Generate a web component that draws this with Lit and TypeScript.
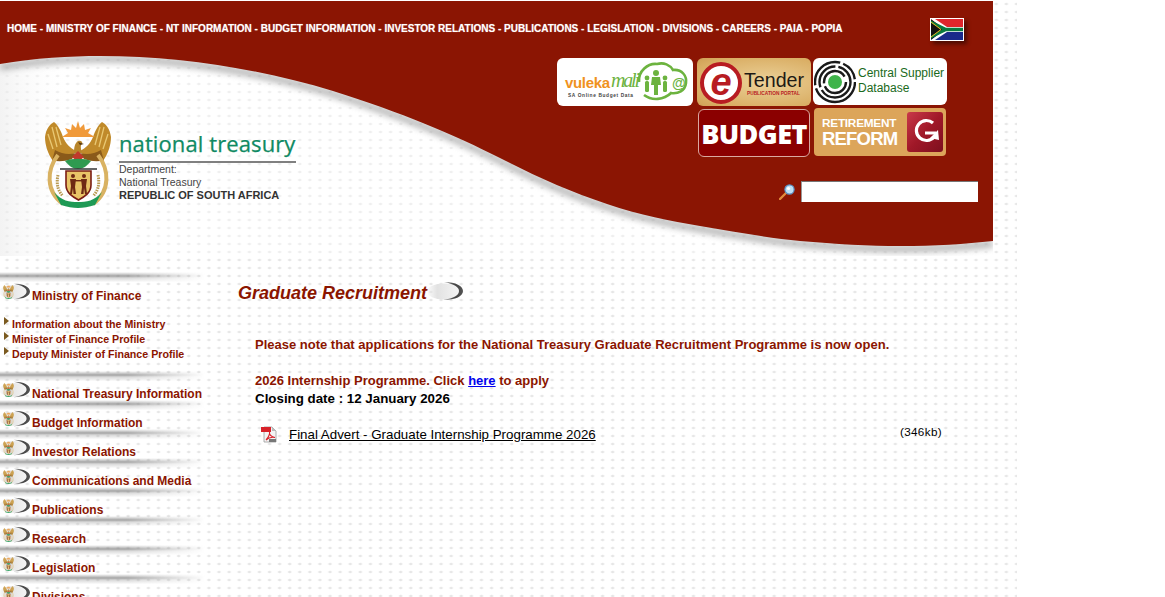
import { LitElement, html, css, svg } from "lit";
import { customElement } from "lit/decorators.js";

const WAVE =
  "M0,63 C35,57 70,55 100,55 C180,55 260,68 333,90 C400,111 455,134 500,157 C535,175 570,191 607,203 C640,214 670,220 700,225 C735,231 770,237 800,240 C835,243 870,245 900,245 C935,245 965,243 993,240";

const arms = () => svg`
  <path d="M0,16 C1,8 5,3 9,1 C13,4 16,10 18,16 C21,23 25,27 31,30 C26,37 17,40 8,40 C3,33 0,24 0,16Z" fill="#c08a2a"/>
  <path d="M66,16 C65,8 61,3 57,1 C53,4 50,10 48,16 C45,23 41,27 35,30 C40,37 49,40 58,40 C63,33 66,24 66,16Z" fill="#c08a2a"/>
  <path d="M3,13 L8,28 M7,6 L12,26 M11,6 L16,24 M63,13 L58,28 M59,6 L54,26 M55,6 L50,24" stroke="#e9c873" stroke-width="1.3" fill="none"/>
  <path d="M10,29 C17,33 24,34 31,32 L27,38 C20,41 13,40 7,40Z" fill="#8a5a1a"/>
  <path d="M56,29 C49,33 42,34 35,32 L39,38 C46,41 53,40 59,40Z" fill="#8a5a1a"/>
  <path d="M17,16 L23,12 L20,7 L26,9 L27,3 L31,7 L33,0 L35,7 L39,3 L40,9 L46,7 L43,12 L50,16 Z" fill="#f09a3a"/>
  <path d="M29,32 C29,26 30,22 33,20 C36,19 38,21 37,23 C35,24 36,28 37,32 Z" fill="#b8862c"/>
  <path d="M33,21 L39,23 L35,24Z" fill="#5a3a12"/>
  <path d="M27,36 L33,30 L39,36 L33,41Z" fill="#c0392b"/>
  <path d="M20,40 C26,37 40,37 46,40 C42,45 38,48 33,48 C28,48 24,45 20,40Z" fill="#2f9a50"/>
  <path d="M15,48 H52" stroke="#333" stroke-width="1.4"/>
  <path d="M13,34 C2,48 0,70 18,83" stroke="#d9b262" stroke-width="4" fill="none"/>
  <path d="M53,34 C64,48 66,70 48,83" stroke="#d9b262" stroke-width="4" fill="none"/>
  <path d="M13,54 C11,63 13,70 18,75 M53,54 C55,63 53,70 48,75" stroke="#b99a52" stroke-width="3" stroke-dasharray="1.5 1" fill="none"/>
  <path d="M21,50 H46 V64 C46,72 39,76 33.5,79 C28,76 21,72 21,64Z" fill="#e8c467" stroke="#7a1c14" stroke-width="1.6"/>
  <g fill="#6e2a14">
    <circle cx="28" cy="55" r="2"/><circle cx="39" cy="55" r="2"/>
    <path d="M25,58 H31 L30,66 L31,73 H28.5 L28,67 L27,73 H25 L26,65Z"/>
    <path d="M36,58 H42 L41,65 L42,73 H40 L39,67 L38.5,73 H36 L37,66Z"/>
    <rect x="30" y="59" width="7" height="1.4"/>
  </g>
  <path d="M9,71 C16,80 25,81 33,81 C41,81 50,80 57,71 L50,84 C44,86 38,87 33,87 C28,87 22,86 16,84Z" fill="#1e9a55"/>
`;

const swoosh = (w: number, h: number) => svg`
  <svg class="swoosh" width=${w} height=${h} viewBox="0 0 35 18" aria-hidden="true">
    <defs>
      <linearGradient id="sw" x1="0" x2="1">
        <stop offset="0" stop-color="#e4e4e4" stop-opacity=".1"/>
        <stop offset=".3" stop-color="#e2e2e2"/>
        <stop offset="1" stop-color="#f6f6f6"/>
      </linearGradient>
      <linearGradient id="cr" x1="0" x2="1">
        <stop offset="0" stop-color="#999"/>
        <stop offset=".6" stop-color="#444"/>
        <stop offset="1" stop-color="#555"/>
      </linearGradient>
    </defs>
    <ellipse cx="16" cy="9.5" rx="17" ry="8" fill="url(#sw)"/>
    <path d="M16,0 C28,0 35,4 35,9 C35,14 28,18 15,18 C26,16.5 31,13 31,9 C31,5 26,2 16,0Z" fill="url(#cr)"/>
  </svg>`;

const NAV = ["HOME","MINISTRY OF FINANCE","NT INFORMATION","BUDGET INFORMATION","INVESTOR RELATIONS","PUBLICATIONS","LEGISLATION","DIVISIONS","CAREERS","PAIA","POPIA"];
const SUBS = ["Information about the Ministry","Minister of Finance Profile","Deputy Minister of Finance Profile"];
const ROWS = ["National Treasury Information","Budget Information","Investor Relations","Communications and Media","Publications","Research","Legislation","Divisions"];

@customElement("app-root")
export class AppRoot extends LitElement {
  static styles = css`
    :host { display: block; height: 100vh; overflow: hidden; background: #fff; font-family: "Liberation Sans", Arial, sans-serif; }
    .page {
      width: 1017px; height: 100vh; padding-top: 1px; box-sizing: border-box;
      background-image: radial-gradient(ellipse 2.3px 1.7px at 7px 4px, #e2e2e2 0, #e8e8e8 45%, rgba(255,255,255,0) 100%);
      background-size: 10.1px 8px;
    }
    .header { position: relative; width: 993px; height: 255px; }
    .art { position: absolute; left: 0; top: 0; z-index: 0; }
    .nav, .stage { position: relative; z-index: 1; }
    .nav { height: 57px; box-sizing: border-box; padding: 17px 29px 0 7px; display: flex; justify-content: space-between; align-items: flex-start; }
    .nav-links { margin-top: 4px; font-size: 10px; line-height: 13px; font-weight: 700; color: #fff; white-space: nowrap; text-shadow: 0 0 1px rgba(255,255,255,.5); }
    .flag { display: block; box-shadow: 3px 3px 4px rgba(0,0,0,.45); }
    .stage { display: grid; grid-template-columns: 557px 1fr; }
    .logo { padding: 63px 0 0 45px; display: flex; gap: 8px; align-items: flex-start; }
    .logo-arms { flex: none; display: block; }
    .logo-text { width: 177px; }
    .logo-name { font-family: "Open Sans", "Noto Sans", sans-serif; font-size: 22px; line-height: 30px; height: 30px; margin-top: 7px; color: #0f8a63; white-space: nowrap; letter-spacing: .1px; -webkit-text-stroke: .25px #0f8a63; }
    .logo-rule { height: 2px; background: #808080; margin: 3px 0 0; }
    .logo-line { font-size: 10.5px; line-height: 13px; color: #444; white-space: nowrap; }
    .logo-strong { font-weight: 700; font-size: 11px; color: #333; }
    .tools-row { display: flex; align-items: flex-start; }
    .tools-row.first { gap: 4px; }
    .tools-row.second { margin: 2px 0 0 141px; gap: 4px; }
    .btn { box-sizing: border-box; border-radius: 6px; overflow: hidden; display: flex; align-items: center; height: 48px; flex: none; }
    .vuleka { width: 136px; background: #fff; }
    .etender { width: 114px; margin-right: -2px; background: radial-gradient(ellipse at 60% 50%, #ecd29a, #d9ad63 80%, #cf9f55); }
    .csd { width: 134px; height: 47px; background: #fff; gap: 2px; padding-left: 1px; }
    .csd-text { font-size: 12px; line-height: 15px; color: #1a6a20; white-space: nowrap; margin-top: -2px; }
    .budget { width: 112px; margin-top: 1px; background: #8b0000; border: 1px solid #d9a8a0; justify-content: center; font-family: "Open Sans", "Noto Sans", sans-serif; font-weight: 800; font-size: 27px; color: #fff; letter-spacing: -.6px; }
    .retire { width: 132px; background: #dca55a; border-radius: 4px; padding-left: 8px; gap: 9px; }
    .retire-text { font-weight: 700; color: #fff; white-space: nowrap; width: 76px; margin-top: 1px; }
    .retire-a { font-size: 11.8px; line-height: 13px; letter-spacing: -.25px; }
    .retire-b { font-size: 18.5px; line-height: 18px; letter-spacing: -.8px; }
    .search { display: flex; align-items: center; gap: 6px; margin: 24px 0 0 222px; }
    .search-box { display: block; width: 177px; height: 21px; box-sizing: border-box; background: #fff; border: 0; border-top: 1px solid #767676; border-left: 1px solid #999; }
    .main { display: flex; position: relative; }
    .side { width: 205px; flex: none; padding-top: 16px; }
    .row { height: 29px; box-sizing: border-box; }
    .row::before { content: ""; display: block; height: 10px; background: linear-gradient(to bottom, rgba(130,130,130,0), rgba(125,125,125,.7) 40%, rgba(170,170,170,.45) 60%, rgba(240,240,240,.2) 100%); -webkit-mask-image: linear-gradient(to right, #000 62%, transparent 100%); mask-image: linear-gradient(to right, #000 62%, transparent 100%); }
    .row-in { display: flex; align-items: flex-start; position: relative; }
    .row.open .row-in { top: 1px; }
    .mark { width: 32px; height: 18px; flex: none; position: relative; }
    .mark svg.mini { position: absolute; left: 3px; top: 2px; opacity: .85; }
    .mark svg.swoosh { position: absolute; left: 0; top: 0; }
    .row-label { font-size: 12px; line-height: 14px; margin-top: 6px; font-weight: 700; color: #8b1500; white-space: nowrap; }
    .subs { list-style: none; margin: 0; padding: 16px 0 9px; }
    .subs li { height: 15px; display: flex; font-size: 10.67px; line-height: 15px; font-weight: 700; color: #8b1500; white-space: nowrap; padding-left: 4px; }
    .tri { width: 0; height: 0; margin: 0 3px 0 0; border-left: 5px solid #7a5a20; border-top: 4px solid transparent; border-bottom: 4px solid transparent; }
    .content { flex: 1; padding: 27px 0 0 33px; min-width: 0; }
    .title { display: flex; align-items: center; height: 20px; }
    h1 { margin: 0; font-size: 18px; line-height: 20px; font-weight: 700; font-style: italic; color: #8b1500; white-space: nowrap; }
    .title svg { margin: -4px 0 0 1px; display: block; }
    .body { padding-left: 17px; }
    .note { margin: 34px 0 0; font-size: 13px; line-height: 16px; font-weight: 700; color: #8b1500; white-space: nowrap; }
    .intern { margin: 19px 0 0; font-size: 13px; line-height: 17px; font-weight: 700; color: #8b1500; white-space: nowrap; }
    .intern a { color: #0000ee; text-decoration: underline; }
    .closing { margin: 1px 0 0; font-size: 13.33px; line-height: 17px; font-weight: 700; color: #000; white-space: nowrap; }
    .doc { display: flex; align-items: flex-start; margin: 19px 0 0 6px; width: 681px; }
    .doc svg { flex: none; display: block; }
    .doc a { margin: 1px 0 0 12px; font-size: 13.33px; line-height: 16px; color: #000; text-decoration: underline; white-space: nowrap; }
    .size { margin: -1px 0 0 auto; font-size: 11.7px; line-height: 14px; color: #000; letter-spacing: .35px; }
  `;

  render() {
    return html`
      <div class="page">
        <header class="header">
          <svg class="art" width="993" height="255" viewBox="0 0 993 255" aria-hidden="true">
            <defs>
              <filter id="bl" x="-5%" y="-20%" width="110%" height="140%"><feGaussianBlur stdDeviation="3"/></filter>
              <linearGradient id="lf" x1="0" x2="1"><stop offset="0" stop-color="#e4e4e4" stop-opacity=".45"/><stop offset="1" stop-color="#fff" stop-opacity="0"/></linearGradient>
              <clipPath id="cl"><rect width="993" height="255"/></clipPath>
            </defs>
            <g clip-path="url(#cl)">
              <path d="${WAVE} V255 H0Z" fill="#fff" fill-opacity=".35"/>
              <path d="M0,63 V255 H70 V60Z" fill="url(#lf)"/>
              <path d="${WAVE}" fill="none" stroke="#888" stroke-width="7" opacity=".6" filter="url(#bl)" transform="translate(0,3)"/>
              <path d="${WAVE} V0 H0Z" fill="#8b1503"/>
            </g>
          </svg>
          <div class="nav">
            <div class="nav-links">${NAV.join(" - ")}</div>
            <svg class="flag" width="34" height="23" viewBox="0 0 34 23" aria-hidden="true">
              <rect width="34" height="23" fill="#fff"/>
              <rect x="1" y="1" width="32" height="10.5" fill="#e0262c"/>
              <rect x="1" y="11.5" width="32" height="10.5" fill="#1a2a8a"/>
              <path d="M1,1 L15,11.5 L1,22Z" fill="#111"/>
              <path d="M1,1 L5,1 L17,9 H33 V14 H17 L5,22 H1 L15,11.5Z" fill="#fff"/>
              <path d="M1,2.5 L16,9.8 H33 V13.2 H16 L1,20.5 L1,18 L12,11.5 L1,5Z" fill="#0a7a3e"/>
              <path d="M1,4 L11,11.5 L1,19" fill="none" stroke="#f0b81c" stroke-width="1"/>
            </svg>
          </div>
          <div class="stage">
            <div class="logo">
              <svg class="logo-arms" width="66" height="87" viewBox="0 0 66 87" aria-hidden="true">${arms()}</svg>
              <div class="logo-text">
                <div class="logo-name">national treasury</div>
                <div class="logo-rule"></div>
                <div class="logo-line">Department:</div>
                <div class="logo-line">National Treasury</div>
                <div class="logo-line logo-strong">REPUBLIC OF SOUTH AFRICA</div>
              </div>
            </div>
            <div class="tools">
              <div class="tools-row first">
                <div class="btn vuleka">
                  <svg width="136" height="48" viewBox="0 0 136 48" aria-hidden="true">
                    <path d="M82,24 C81,13 91,5 100,6 C107,4 113,7 116,12 C125,11 130,18 129,25 C128,33 121,36 114,35 C107,42 95,43 87,37" fill="none" stroke="#6cb33f" stroke-width="2.6"/>
                    <g fill="#6cb33f">
                      <circle cx="90" cy="20" r="2.4"/><rect x="88" y="23" width="4" height="11" rx="1.5"/>
                      <circle cx="99" cy="15" r="3"/><path d="M95,19 H103 L104,27 H101 V37 H97 V27 H94Z"/>
                      <circle cx="108" cy="20" r="2.4"/><rect x="106" y="23" width="4" height="11" rx="1.5"/>
                    </g>
                    <text x="8" y="30" font-family="Liberation Sans, sans-serif" font-weight="700" font-size="15" fill="#f0921e" textLength="45">vuleka</text>
                    <text x="54" y="29" font-family="Liberation Serif, serif" font-style="italic" font-size="20" fill="#6cb33f" textLength="29">mali</text>
                    <text x="11" y="39" font-family="Liberation Sans, sans-serif" font-weight="700" font-size="4.8" fill="#444" textLength="65">SA Online Budget Data</text>
                    <text x="115" y="30" font-family="Liberation Sans, sans-serif" font-weight="700" font-size="14" fill="#6cb33f">@</text>
                  </svg>
                </div>
                <div class="btn etender">
                  <svg width="114" height="48" viewBox="0 0 114 48" aria-hidden="true">
                    <circle cx="24" cy="25" r="19" fill="#fff" stroke="#b81c22" stroke-width="4"/>
                    <text x="24" y="37" text-anchor="middle" font-family="Liberation Sans, sans-serif" font-weight="700" font-style="italic" font-size="38" fill="#b81c22">e</text>
                    <text x="47" y="29" font-family="Liberation Sans, sans-serif" font-size="21" fill="#1e1a14" textLength="60" lengthAdjust="spacingAndGlyphs">Tender</text>
                    <text x="50" y="37" font-family="Liberation Sans, sans-serif" font-weight="700" font-size="4.6" fill="#b81c22" textLength="53" lengthAdjust="spacingAndGlyphs">PUBLICATION PORTAL</text>
                  </svg>
                </div>
                <div class="btn csd">
                  <svg width="42" height="47" viewBox="0 0 42 47" style="flex:none" aria-hidden="true">
                    <g fill="none" stroke="#1a1a1a">
                      <circle cx="21" cy="24" r="20" stroke-width="2.4" stroke-dasharray="56 3 40 3 20"/>
                      <circle cx="21" cy="24" r="15.5" stroke-width="2.4" stroke-dasharray="40 3 30 3"/>
                      <circle cx="21" cy="24" r="11" stroke-width="2.4" stroke-dasharray="30 3 30"/>
                    </g>
                    <circle cx="21" cy="24" r="7" fill="#3fb44a"/>
                  </svg>
                  <div class="csd-text">Central Supplier<br />Database</div>
                </div>
              </div>
              <div class="tools-row second">
                <div class="btn budget">BUDGET</div>
                <div class="btn retire">
                  <div class="retire-text"><div class="retire-a">RETIREMENT</div><div class="retire-b">REFORM</div></div>
                  <svg width="36" height="40" viewBox="0 0 36 40" style="flex:none" aria-hidden="true">
                    <defs><linearGradient id="rd" x1="0" y1="0" x2="1" y2="1"><stop offset="0" stop-color="#c9394a"/><stop offset=".5" stop-color="#a01828"/><stop offset="1" stop-color="#7d0f1e"/></linearGradient></defs>
                    <rect width="36" height="40" rx="3" fill="url(#rd)"/>
                    <path d="M26,11 A10,10 0 1 0 27,25 M18,21 H29" fill="none" stroke="#fff" stroke-width="3.2"/>
                    <path d="M23,26 L31,18 L32,28Z" fill="#fff"/>
                  </svg>
                </div>
              </div>
              <div class="search">
                <svg width="16" height="16" viewBox="0 0 16 16" aria-hidden="true">
                  <path d="M1,15 L8,8" stroke="#e08a3c" stroke-width="2.4" stroke-linecap="round"/>
                  <circle cx="10.5" cy="5.5" r="4.6" fill="#bfe0f5" stroke="#5a93c8" stroke-width="1.2"/>
                  <circle cx="9.5" cy="4.5" r="1.6" fill="#fff"/>
                </svg>
                <div class="search-box"></div>
              </div>
            </div>
          </div>
        </header>
        <div class="main">
          <nav class="side">
            <div class="row open">
              <div class="row-in">
                <div class="mark">${swoosh(30, 17)}<svg class="mini" width="11" height="14" viewBox="0 0 66 87" aria-hidden="true">${arms()}</svg></div>
                <div class="row-label">Ministry of Finance</div>
              </div>
            </div>
            <ul class="subs">
              ${SUBS.map((s) => html`<li><span class="tri"></span>${s}</li>`)}
            </ul>
            ${ROWS.map((r) => html`
              <div class="row">
                <div class="row-in">
                  <div class="mark">${swoosh(30, 17)}<svg class="mini" width="11" height="14" viewBox="0 0 66 87" aria-hidden="true">${arms()}</svg></div>
                  <div class="row-label">${r}</div>
                </div>
              </div>`)}
          </nav>
          <main class="content">
            <div class="title">
              <h1>Graduate Recruitment</h1>
              ${swoosh(35, 18)}
            </div>
            <div class="body">
              <p class="note">Please note that applications for the National Treasury Graduate Recruitment Programme is now open.</p>
              <p class="intern">2026 Internship Programme. Click <a href="#">here</a> to apply</p>
              <p class="closing">Closing date : 12 January 2026</p>
              <div class="doc">
                <svg width="16" height="17" viewBox="0 0 16 17" aria-hidden="true">
                  <path d="M3,1 H11 L15,5 V16 H3Z" fill="#f4f4f4" stroke="#999" stroke-width=".8"/>
                  <path d="M11,1 V5 H15Z" fill="#bbb"/>
                  <rect x="0" y="1" width="10" height="5" fill="#d8222a"/>
                  <path d="M5,14 C8,11 9,7 8.5,6 C8,8 10,11 14,11.5 C11,11 7,12 5,14Z" fill="none" stroke="#d8222a" stroke-width="1.1"/>
                  <rect x="8" y="13" width="7" height="3" fill="#777"/>
                </svg>
                <a href="#">Final Advert - Graduate Internship Programme 2026</a>
                <p class="size">(346kb)</p>
              </div>
            </div>
          </main>
        </div>
      </div>
    `;
  }
}
